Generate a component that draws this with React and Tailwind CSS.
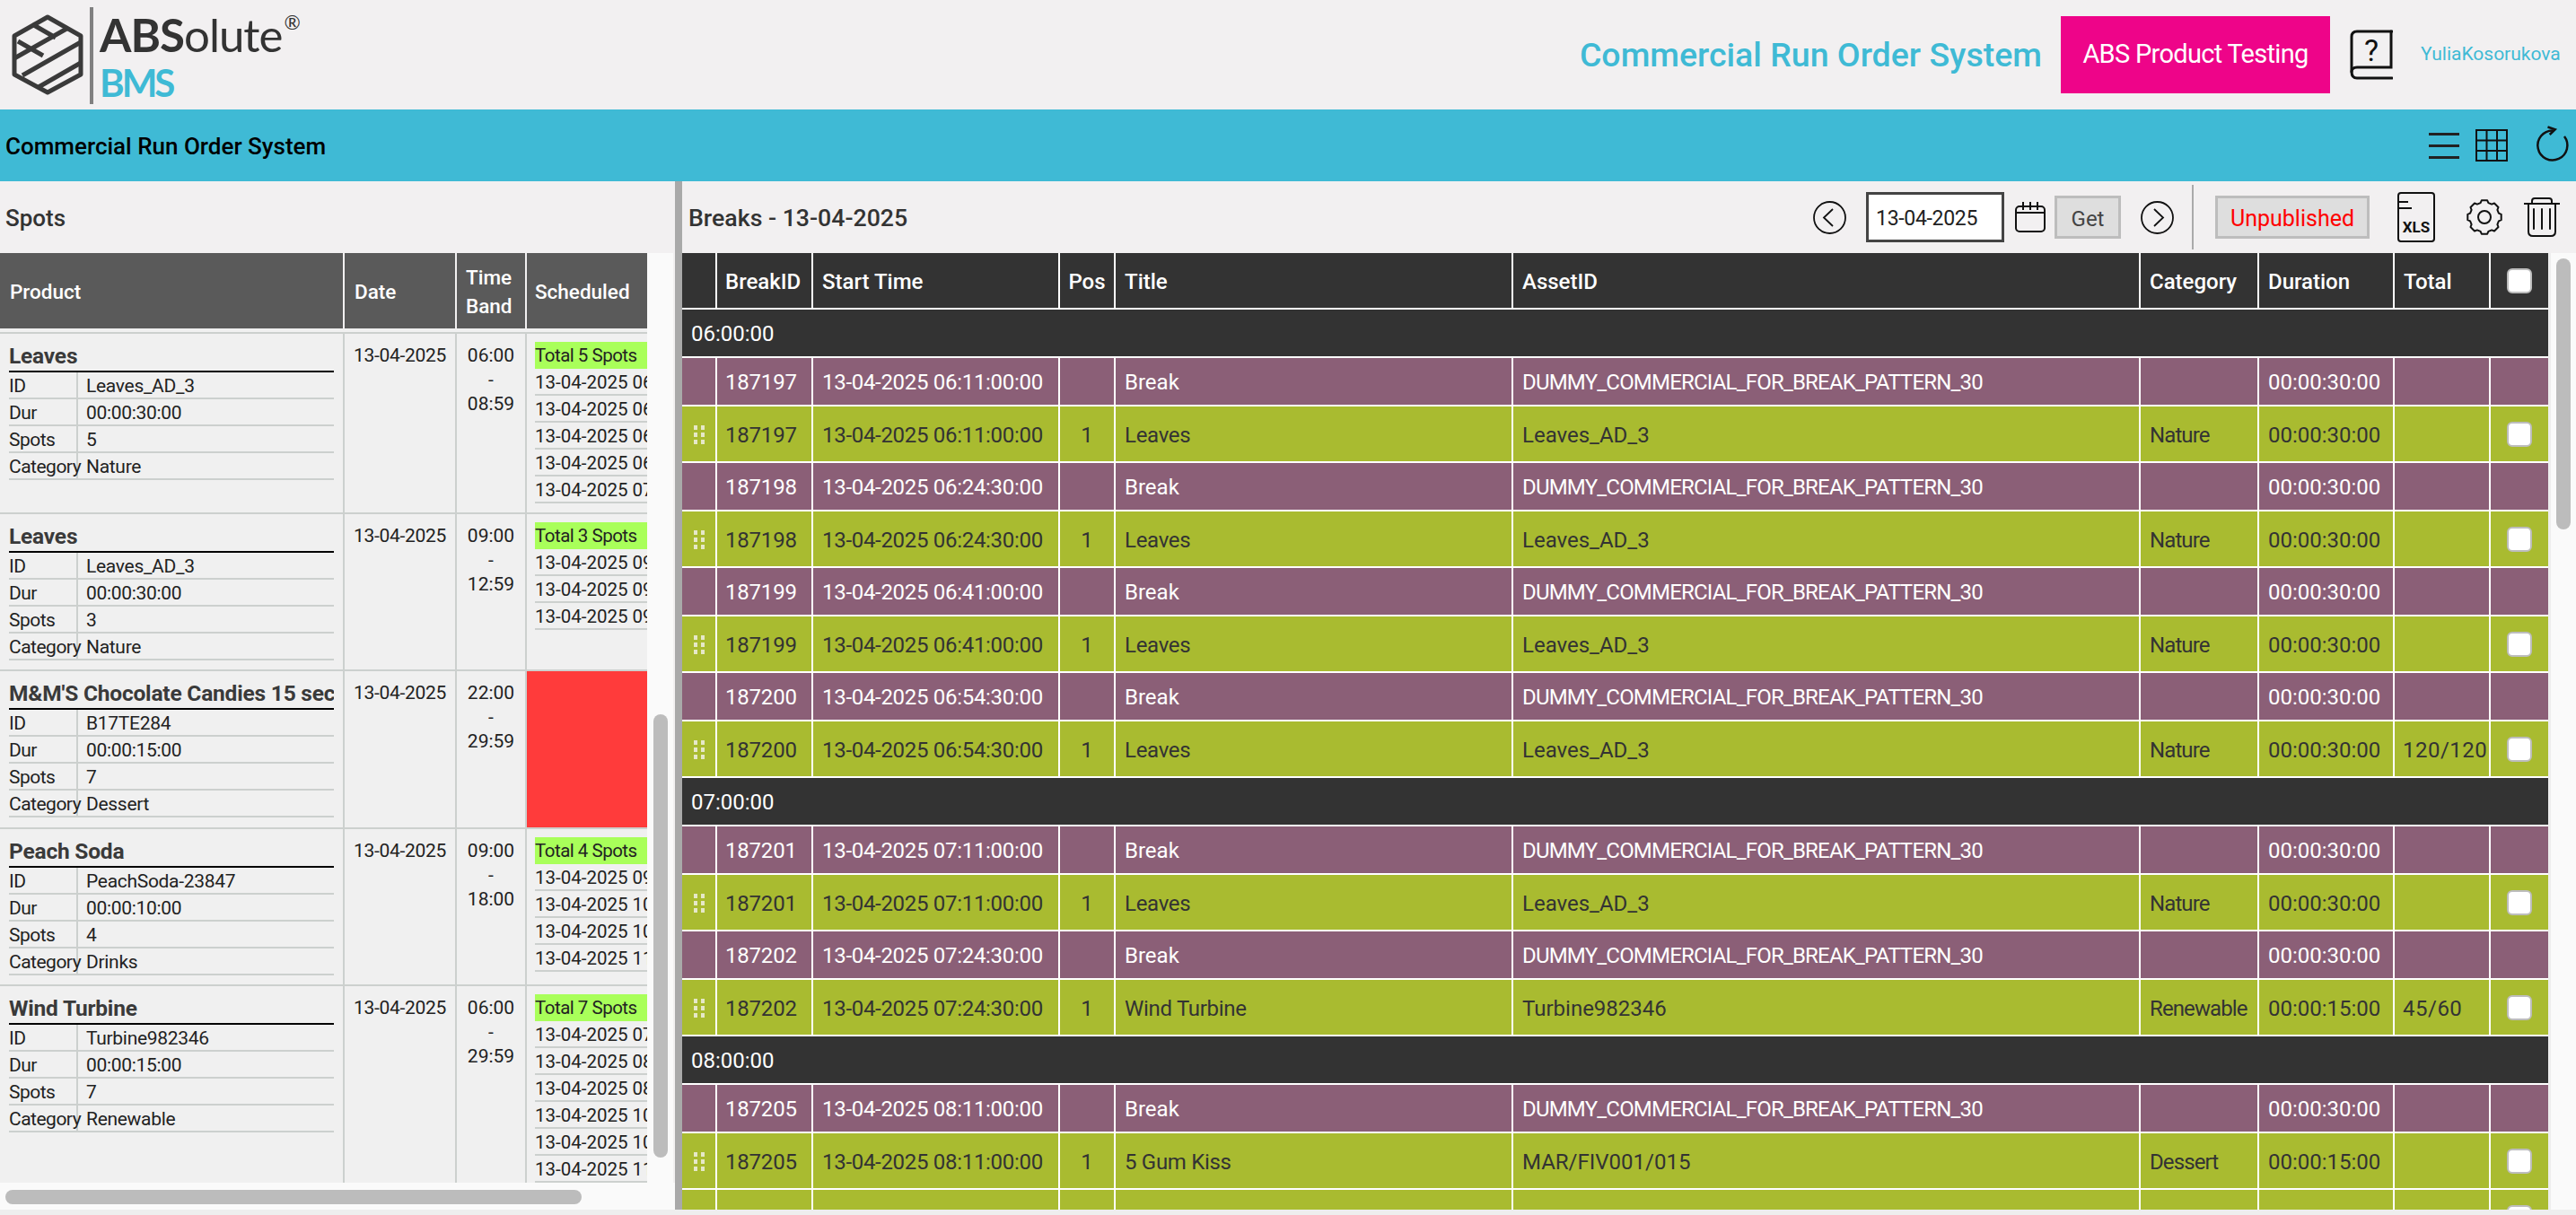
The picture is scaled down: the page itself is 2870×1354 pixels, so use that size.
const cols = 'grid grid-cols-[37px_105px_273px_60px_441px_697px_130px_149px_105px_64px] gap-x-[2px] shrink-0';

const breakData = [
  { group: '06:00:00' },
  { id: '187197', time: '06:11:00:00', title: 'Leaves', asset: 'Leaves_AD_3', cat: 'Nature', dur: '00:00:30:00' },
  { id: '187198', time: '06:24:30:00', title: 'Leaves', asset: 'Leaves_AD_3', cat: 'Nature', dur: '00:00:30:00' },
  { id: '187199', time: '06:41:00:00', title: 'Leaves', asset: 'Leaves_AD_3', cat: 'Nature', dur: '00:00:30:00' },
  { id: '187200', time: '06:54:30:00', title: 'Leaves', asset: 'Leaves_AD_3', cat: 'Nature', dur: '00:00:30:00', total: '120/120' },
  { group: '07:00:00' },
  { id: '187201', time: '07:11:00:00', title: 'Leaves', asset: 'Leaves_AD_3', cat: 'Nature', dur: '00:00:30:00' },
  { id: '187202', time: '07:24:30:00', title: 'Wind Turbine', asset: 'Turbine982346', cat: 'Renewable', dur: '00:00:15:00', total: '45/60' },
  { group: '08:00:00' },
  { id: '187205', time: '08:11:00:00', title: '5 Gum Kiss', asset: 'MAR/FIV001/015', cat: 'Dessert', dur: '00:00:15:00' },
];

const spots = [
  {
    name: 'Leaves', id: 'Leaves_AD_3', dur: '00:00:30:00', count: '5', cat: 'Nature', from: '06:00', to: '08:59',
    total: 'Total 5 Spots', times: ['06:11:00:00', '06:24:30:00', '06:41:00:00', '06:54:30:00', '07:11:00:00'],
  },
  {
    name: 'Leaves', id: 'Leaves_AD_3', dur: '00:00:30:00', count: '3', cat: 'Nature', from: '09:00', to: '12:59',
    total: 'Total 3 Spots', times: ['09:11:00:00', '09:24:30:00', '09:41:00:00'],
  },
  {
    name: "M&M'S Chocolate Candies 15 sec", id: 'B17TE284', dur: '00:00:15:00', count: '7', cat: 'Dessert', from: '22:00', to: '29:59',
    missing: true,
  },
  {
    name: 'Peach Soda', id: 'PeachSoda-23847', dur: '00:00:10:00', count: '4', cat: 'Drinks', from: '09:00', to: '18:00',
    total: 'Total 4 Spots', times: ['09:41:00:00', '10:11:00:00', '10:41:00:00', '11:11:00:00'],
  },
  {
    name: 'Wind Turbine', id: 'Turbine982346', dur: '00:00:15:00', count: '7', cat: 'Renewable', from: '06:00', to: '29:59',
    total: 'Total 7 Spots', times: ['07:24:30:00', '08:11:00:00', '08:41:00:00', '10:11:00:00', '10:41:00:00', '11:11:00:00'],
  },
];

function Logo() {
  return (
    <svg width="84" height="96" viewBox="12 14 84 96" fill="none" stroke="#3a3a3a" strokeWidth="5" className="shrink-0">
      <path d="M53 20 L90 41 V84 L53 104 L16 84 V41 Z" strokeLinejoin="round" />
      <path d="M25 85 L90 48 M43 98 L90 71 M20 47 L48 63 M16 66 L76 32 M36 28 L62 43" />
    </svg>
  );
}

function HelpIcon() {
  return (
    <svg width="48" height="56" viewBox="0 0 48 56" fill="none" stroke="#111" strokeWidth="3" strokeLinecap="round">
      <path d="M47 2 H8 Q2 2 2 8 V47 Q2 54 8 54 H47" />
      <path d="M2 47 Q2 42 8 42 H46 V2" />
      <text x="24" y="35" textAnchor="middle" fontSize="34" fill="#111" stroke="none" fontFamily="Roboto, sans-serif">?</text>
    </svg>
  );
}

function GridIcon() {
  return (
    <svg width="36" height="36" viewBox="0 0 36 36" fill="none" stroke="#111" strokeWidth="2">
      <rect x="1" y="1" width="34" height="34" />
      <path d="M12.5 1 V35 M24 1 V35 M1 12.5 H35 M1 24 H35" />
    </svg>
  );
}

function RefreshIcon() {
  return (
    <svg width="40" height="44" viewBox="0 0 40 44" fill="none" stroke="#111" strokeWidth="2.5">
      <path d="M20 5.5 A16.5 16.5 0 1 0 33 12" />
      <path d="M14.5 1.5 L22.7 4.2 L16.7 10" />
    </svg>
  );
}

function Chevron({ left }) {
  return (
    <svg width="37" height="37" viewBox="0 0 37 37" fill="none" stroke="#111" strokeWidth="1.8">
      <circle cx="18.5" cy="18.5" r="17.5" />
      <path d={left ? 'M22 9 L12 18.5 L22 28' : 'M15 9 L25 18.5 L15 28'} />
    </svg>
  );
}

function CalendarIcon() {
  return (
    <svg width="34" height="34" viewBox="0 0 34 34" fill="none" stroke="#111" strokeWidth="2">
      <rect x="1" y="5" width="32" height="28" rx="4" />
      <path d="M1 12 H33 M9 0 V9 M17 0 V9 M25 0 V9" />
    </svg>
  );
}

function XlsIcon() {
  return (
    <svg width="42" height="56" viewBox="0 0 42 56" fill="none" stroke="#111" strokeWidth="2">
      <rect x="1" y="1" width="40" height="54" rx="3" />
      <path d="M1 11 H12 M1 18 H16" />
      <text x="21" y="45" textAnchor="middle" fontSize="17" fontWeight="700" fill="#111" stroke="none" fontFamily="Roboto, sans-serif">XLS</text>
    </svg>
  );
}

// 8 tooth outline, easier to generate than to write out
const gearPath = () => {
  const pts = [];
  for (let i = 0; i < 8; i++) {
    const a = (i * Math.PI) / 4;
    [[-0.27, 16.5], [-0.17, 19], [0.17, 19], [0.27, 16.5]].forEach(([d, r]) => {
      pts.push(`${(20 + r * Math.sin(a + d)).toFixed(1)} ${(20 - r * Math.cos(a + d)).toFixed(1)}`);
    });
  }
  return `M${pts.join(' L')} Z`;
};

function GearIcon() {
  return (
    <svg width="40" height="40" viewBox="0 0 40 40" fill="none" stroke="#111" strokeWidth="2" strokeLinejoin="round">
      <path d={gearPath()} />
      <circle cx="20" cy="20" r="7" />
    </svg>
  );
}

function TrashIcon() {
  return (
    <svg width="40" height="44" viewBox="0 0 40 44" fill="none" stroke="#111" strokeWidth="2" strokeLinecap="round">
      <path d="M0 7 H40" />
      <path d="M9 7 V4 Q9 1 12 1 H28 Q31 1 31 4 V7" />
      <path d="M5 7 V38 Q5 43 10 43 H30 Q35 43 35 38 V7" />
      <path d="M11 13 V35 M20 13 V35 M29 13 V35" />
    </svg>
  );
}

function Grip() {
  return (
    <svg width="14" height="22" viewBox="0 0 14 22" fill="#e6e8c8">
      <rect x="1" y="1" width="4" height="5" />
      <rect x="9" y="1" width="4" height="5" />
      <rect x="1" y="9" width="4" height="5" />
      <rect x="9" y="9" width="4" height="5" />
      <rect x="1" y="17" width="4" height="5" />
      <rect x="9" y="17" width="4" height="5" />
    </svg>
  );
}

const Check = () => <div className="w-[28px] h-[28px] bg-white border-2 border-[#bdbdbd] rounded-[6px]" />;

function BreakRows({ b }) {
  const cell = 'bg-[#8b5f77] text-white flex items-center px-[10px] pt-[2px] whitespace-nowrap';
  const spot = 'bg-[#a9bb30] text-[#333] flex items-center px-[10px] pt-[2px] whitespace-nowrap';
  return (
    <>
      <div className={`${cols} h-[52px]`}>
        <div className={cell} />
        <div className={`${cell} !pl-[9px] tracking-[-0.2px]`}>{b.id}</div>
        <div className={`${cell} tracking-[-0.3px]`}>13-04-2025 {b.time}</div>
        <div className={cell} />
        <div className={cell}>Break</div>
        <div className={`${cell} tracking-[-0.8px]`}>DUMMY_COMMERCIAL_FOR_BREAK_PATTERN_30</div>
        <div className={cell} />
        <div className={cell}>00:00:30:00</div>
        <div className={cell} />
        <div className={cell} />
      </div>
      <div className={`${cols} h-[61px]`}>
        <div className={`${spot} justify-center !px-0 !pt-0`}><Grip /></div>
        <div className={`${spot} !pl-[9px] tracking-[-0.2px]`}>{b.id}</div>
        <div className={`${spot} tracking-[-0.3px]`}>13-04-2025 {b.time}</div>
        <div className={`${spot} justify-center`}>1</div>
        <div className={`${spot} tracking-[-0.3px]`}>{b.title}</div>
        <div className={spot}>{b.asset}</div>
        <div className={`${spot} tracking-[-0.9px]`}>{b.cat}</div>
        <div className={spot}>{b.dur}</div>
        <div className={`${spot} !pl-[9px] tracking-[0.5px]`}>{b.total}</div>
        <div className={`${spot} justify-center !pt-0`}><Check /></div>
      </div>
    </>
  );
}

function SpotRow({ s, className }) {
  const rows = [['ID', s.id], ['Dur', s.dur], ['Spots', s.count], ['Category', s.cat]];
  return (
    <div className={`grid grid-cols-[382px_123px_76px_134px] gap-x-[2px] bg-[#ccd0ce] pb-[2px] ${className || ''}`}>
      <div className="bg-[#f0f0f0] px-[10px] pb-[10px]">
        <div className="h-[43px] border-b-2 border-black flex items-end text-[24.5px] leading-[32px] font-bold text-[#3a3a3a] whitespace-nowrap overflow-hidden tracking-[-0.2px]">{s.name}</div>
        {rows.map(([k, v]) => (
          <div key={k} className="flex h-[30px] border-b-2 border-[#ccd0ce] text-[21px] leading-[30px] text-[#222]">
            <div className="w-[77px] border-r-2 border-[#ccd0ce] whitespace-nowrap tracking-[-0.5px]">{k}</div>
            <div className="pl-[9px] tracking-[-0.3px]">{v}</div>
          </div>
        ))}
      </div>
      <div className="bg-[#f0f0f0] pt-[11px] text-center text-[21px] leading-[27px] text-[#222] tracking-[-0.3px]">13-04-2025</div>
      <div className="bg-[#f0f0f0] pt-[11px] text-center text-[21px] leading-[27px] text-[#222]">
        <div>{s.from}</div>
        <div>-</div>
        <div>{s.to}</div>
      </div>
      {s.missing ? (
        <div className="bg-[#ff3b3b]" />
      ) : (
        <div className="bg-[#f0f0f0] pl-[9px] pt-[9px] pb-[10px] overflow-hidden text-[20.5px] text-[#222]">
          <div className="h-[30px] bg-[#a9ff5a] leading-[31px] whitespace-nowrap tracking-[-0.5px]">{s.total}</div>
          {s.times.map((t) => (
            <div key={t} className="h-[30px] border-b-2 border-[#ccd0ce] leading-[31px] whitespace-nowrap">13-04-2025 {t}</div>
          ))}
        </div>
      )}
    </div>
  );
}

export default function App() {
  return (
    <div className="w-[2870px] h-[1354px] overflow-hidden flex flex-col bg-[#f2f0f1] font-['Roboto',sans-serif] text-[#222]">
      <header className="h-[122px] flex items-center shrink-0">
        <div className="flex items-center pl-[12px] gap-[4px]">
          <Logo />
          <div className="w-[4px] h-[108px] bg-[#808080] mt-[2px]" />
          <div className="pl-[3px] flex flex-col font-['Lato',sans-serif]">
            <div className="flex items-start text-[#333] text-[51px] leading-[58px] h-[62px] tracking-[-1px]">
              <span className="font-bold">ABS</span>
              <span>olute</span>
              <span className="text-[22px] leading-[30px] ml-[2px]">®</span>
            </div>
            <div className="text-[#3fbad5] text-[42px] leading-[40px] font-bold tracking-[-3px]">BMS</div>
          </div>
        </div>
        <div className="ml-auto flex items-center">
          <div className="text-[#3fbad5] text-[37.5px] font-medium whitespace-nowrap mr-[21px]">Commercial Run Order System</div>
          <div className="w-[300px] h-[86px] bg-[#ee0489] text-white text-[29px] tracking-[-0.7px] flex items-center justify-center mr-[22px]">ABS Product Testing</div>
          <HelpIcon />
          <div className="text-[#3fbad5] text-[21px] w-[153px] ml-[31px] mr-[20px] whitespace-nowrap">YuliaKosorukova</div>
        </div>
      </header>

      <div className="h-[80px] bg-[#3fbad5] flex items-center pl-[6px] shrink-0">
        <div className="text-[26px] font-medium text-black pt-[3px]">Commercial Run Order System</div>
        <div className="ml-auto flex items-center pr-[6px]">
          <div className="w-[34px] flex flex-col gap-[10px] mr-[18px]">
            <div className="h-[3px] bg-[#222]" />
            <div className="h-[3px] bg-[#222]" />
            <div className="h-[3px] bg-[#222]" />
          </div>
          <GridIcon />
          <div className="ml-[30px]"><RefreshIcon /></div>
        </div>
      </div>

      <div className="h-[1146px] flex shrink-0">
        <div className="w-[752px] flex flex-col">
          <div className="h-[80px] flex items-center pl-[6px] pt-[2px] text-[26px] font-medium text-[#333]">Spots</div>
          <div className="flex h-[1036px]">
            <div className="w-[721px] overflow-hidden">
              <div className="grid grid-cols-[382px_123px_76px_134px] gap-x-[2px] text-white text-[22.5px] font-medium leading-[32px]">
                <div className="h-[84px] bg-[#5a5a5a] flex items-center px-[11px] pt-[2px]">Product</div>
                <div className="h-[84px] bg-[#5a5a5a] flex items-center px-[11px] pt-[2px]">Date</div>
                <div className="h-[84px] bg-[#5a5a5a] flex items-center px-[10px] pt-[2px]">Time Band</div>
                <div className="h-[84px] bg-[#5a5a5a] flex items-center px-[9px] pt-[2px]">Scheduled</div>
              </div>
              <div className="h-[6px] bg-[#f0f0f0] border-b-2 border-[#ccd0ce]" />
              {spots.map((s, i) => (
                <SpotRow key={i} s={s} className={i === 2 ? 'min-h-[176px]' : ''} />
              ))}
            </div>
            <div className="w-[29px] bg-[#fafafa] pt-[514px] px-[7px]">
              <div className="w-[16px] h-[494px] bg-[#bcbcbc] rounded-full" />
            </div>
          </div>
          <div className="h-[30px] bg-[#fafafa] pt-[8px] pl-[6px]">
            <div className="w-[642px] h-[16px] bg-[#bcbcbc] rounded-full" />
          </div>
        </div>

        <div className="w-[8px] bg-[#a9a9a9]" />

        <div className="flex-1 flex flex-col min-w-0">
          <div className="h-[80px] flex items-center pl-[7px] shrink-0">
            <div className="text-[26.7px] font-medium text-[#333] pt-[2px]">Breaks - 13-04-2025</div>
            <div className="ml-auto flex items-center">
              <Chevron left />
              <div className="w-[154px] h-[56px] ml-[22px] border-[3px] border-[#444] bg-white flex items-center pl-[8px] pt-[5px] text-[23px] tracking-[-0.3px] text-[#222]">13-04-2025</div>
              <div className="ml-[12px]"><CalendarIcon /></div>
              <div className="w-[74px] h-[48px] ml-[10px] bg-[#dedede] border-[3px] border-[#bdbdbd] flex items-center justify-center pt-[3px] text-[24px] text-[#444]">Get</div>
              <div className="ml-[22px]"><Chevron /></div>
              <div className="w-[2px] h-[72px] ml-[20px] bg-[#aaaaaa]" />
              <div className="w-[172px] h-[48px] ml-[24px] bg-[#dedede] border-[3px] border-[#bdbdbd] flex items-center justify-center pt-[3px] text-[25px] text-[#ff0000]">Unpublished</div>
              <div className="ml-[31px]"><XlsIcon /></div>
              <div className="ml-[35px]"><GearIcon /></div>
              <div className="ml-[24px] mr-[18px]"><TrashIcon /></div>
            </div>
          </div>
          <div className="flex h-[1066px]">
            <div className="w-[2079px] overflow-hidden bg-white flex flex-col gap-y-[2px] text-[24px] shrink-0">
              <div className={`${cols} h-[61px] text-white font-medium`}>
                <div className="bg-[#333]" />
                <div className="bg-[#333] flex items-center pl-[9px] pt-[2px]">BreakID</div>
                <div className="bg-[#333] flex items-center px-[10px] pt-[2px]">Start Time</div>
                <div className="bg-[#333] flex items-center justify-center pt-[2px]">Pos</div>
                <div className="bg-[#333] flex items-center px-[10px] pt-[2px]">Title</div>
                <div className="bg-[#333] flex items-center px-[10px] pt-[2px]">AssetID</div>
                <div className="bg-[#333] flex items-center px-[10px] pt-[2px]">Category</div>
                <div className="bg-[#333] flex items-center px-[10px] pt-[2px]">Duration</div>
                <div className="bg-[#333] flex items-center px-[10px] pt-[2px]">Total</div>
                <div className="bg-[#333] flex items-center justify-center"><Check /></div>
              </div>
              {breakData.map((b) =>
                b.group ? (
                  <div key={b.group} className="h-[52px] shrink-0 bg-[#333] text-white flex items-center pl-[10px] pt-[2px]">{b.group}</div>
                ) : (
                  <BreakRows key={b.id} b={b} />
                )
              )}
              <div className={`${cols} h-[61px]`}>
                {[...Array(10)].map((_, i) => (
                  <div key={i} className={`bg-[#a9bb30] flex justify-center ${i === 9 ? 'pt-[17px]' : ''}`}>{i === 9 && <Check />}</div>
                ))}
              </div>
            </div>
            <div className="w-[3px] bg-[#eeeeee] shrink-0" />
            <div className="flex-1 bg-[#fafafa] pt-[6px] pl-[6px]">
              <div className="w-[16px] h-[302px] bg-[#bcbcbc] rounded-full" />
            </div>
          </div>
        </div>
      </div>

      <div className="h-[6px] bg-[#eeeeee] shrink-0" />
    </div>
  );
}
